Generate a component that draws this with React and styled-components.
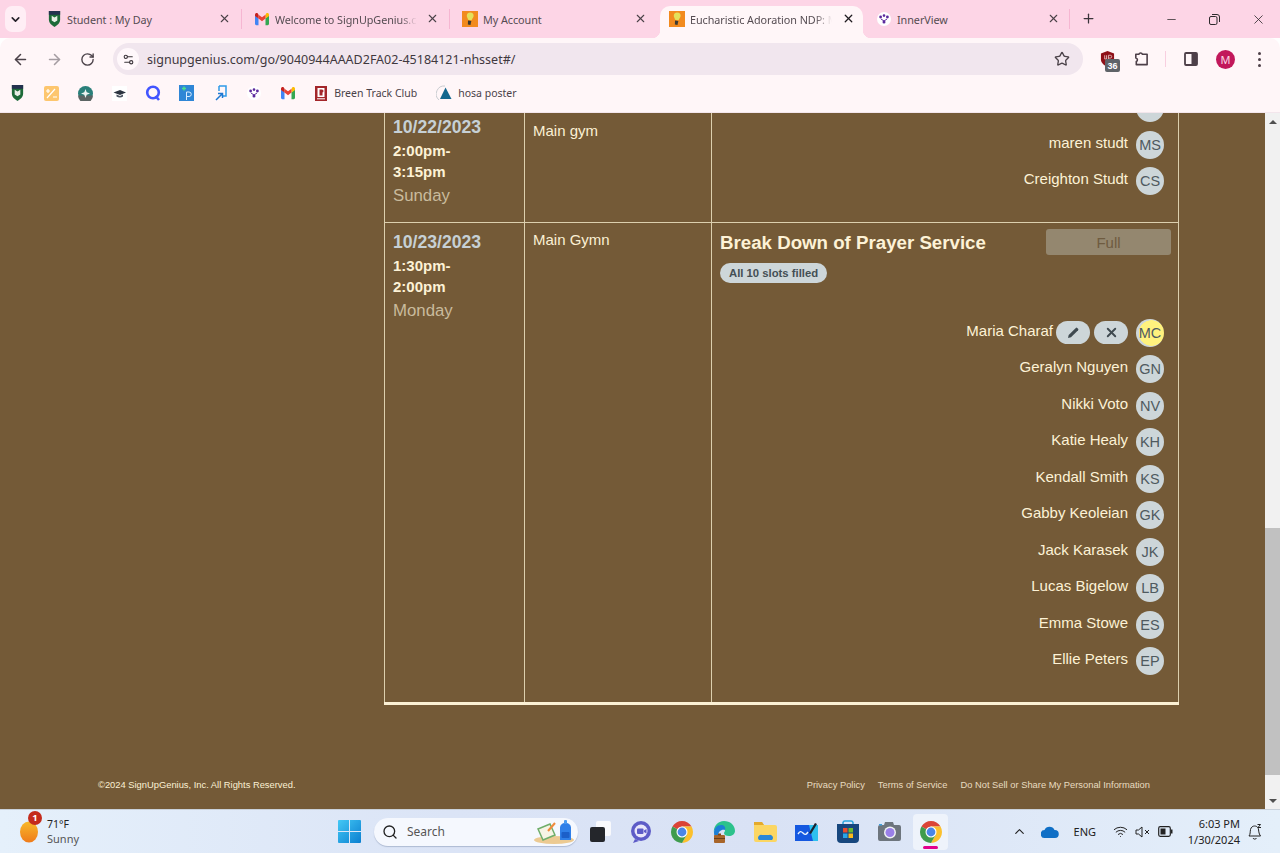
import React from "react";
import styled, { createGlobalStyle } from "styled-components";
import { ArrowLeft, ArrowRight, RotateCw, Star, X, Plus, Minus, ChevronDown, ChevronUp, Search, Wifi, Settings2 } from "lucide-react";

const GlobalStyle = createGlobalStyle`
  html, body { margin: 0; padding: 0; height: 100%; overflow: hidden; }
  #root { height: 100%; }
  * { box-sizing: border-box; }
`;

/* ---------- favicons and drawings ---------- */
const Shield = ({ size = 15 }) => (
  <svg width={size} height={size + 1} viewBox="0 0 16 17">
    <path d="M2 0h12v9c0 4-3 6-6 8-3-2-6-4-6-8z" fill="#1d6a38" />
    <path d="M2 0h12v4H2z" fill="#24314f" />
    <path d="M5 5l3 2 3-2v5l-3 2-3-2z" fill="#e8efe6" />
  </svg>
);
const Gmail = ({ size = 14 }) => (
  <svg width={size} height={size} viewBox="0 0 16 14">
    <path d="M0 3v9.5c0 .8.7 1.5 1.5 1.5H4V6z" fill="#4285f4" />
    <path d="M16 3v9.5c0 .8-.7 1.5-1.5 1.5H12V6z" fill="#34a853" />
    <path d="M12 2v4.5L16 3.5V2c0-1.7-2-2.5-3-1.5z" fill="#fbbc04" />
    <path d="M4 2v4.5l4 3 4-3V2L8 5z" fill="#ea4335" />
    <path d="M0 2v1.5l4 3V2L3 .5C2-.5 0 .3 0 2z" fill="#c5221f" />
  </svg>
);
const Bulb = () => (
  <svg width="16" height="16" viewBox="0 0 16 16">
    <rect width="16" height="16" fill="#f28a1e" />
    <path d="M8 1.5c2.500 0 4 1.700 3.600 3.800-.3 1.500-1.600 2.400-2 4L6 8.800C6 7.400 4.700 6.300 4.800 4.600 5 2.700 6.200 1.500 8 1.500z" fill="#e4e05a" />
    <path d="M6 9.500l3.300.6-.8 3.900-2.600-.5z" fill="#3b3a32" />
  </svg>
);
const InnerView = ({ bg = "#fff" }) => (
  <svg width="14" height="14" viewBox="0 0 14 14">
    <circle cx="7" cy="7" r="7" fill={bg} />
    <circle cx="3.6" cy="5" r="1.4" fill="#5b2a9d" />
    <circle cx="10.4" cy="5" r="1.4" fill="#5b2a9d" />
    <circle cx="7" cy="3.6" r="1.3" fill="#5b2a9d" />
    <circle cx="7" cy="10" r="1.5" fill="#5b2a9d" />
    <path d="M4 7l3 2 3-2" stroke="#5b2a9d" fill="none" strokeWidth="1" />
  </svg>
);
const CalcIcon = () => (
  <svg width="15" height="15" viewBox="0 0 15 15">
    <rect width="15" height="15" rx="2" fill="#fdc66e" />
    <path d="M2 5h4M4 3v4M3 12l8-9M9 11h4" stroke="#fff" strokeWidth="1.2" />
  </svg>
);
const CompassIcon = () => (
  <svg width="15" height="15" viewBox="0 0 15 15">
    <circle cx="7.5" cy="7.5" r="7.5" fill="#2a7f7a" />
    <path d="M0 9.5h15A7.500 7.500 0 0 1 0 9.500z" fill="#5b6463" />
    <path d="M7.5 3l1.200 3.300L12 7.500 8.700 8.700 7.500 12 6.300 8.700 3 7.500l3.300-1.200z" fill="#eef3f2" />
  </svg>
);
const CapIcon = () => (
  <svg width="15" height="15" viewBox="0 0 15 15">
    <rect width="15" height="15" fill="#fff" />
    <path d="M1.5 6.500L8 4l6 2.500L8 9z" fill="#2c3440" />
    <path d="M4.5 8.500v2c2 1.300 5 1.300 6.500 0v-2L8 10z" fill="#4a5360" />
  </svg>
);
const QIcon = () => (
  <svg width="16" height="16" viewBox="0 0 16 16">
    <circle cx="8" cy="7.5" r="5.8" fill="none" stroke="#4255ff" strokeWidth="2.6" />
    <path d="M10.5 11l3.500 4" stroke="#4255ff" strokeWidth="2.6" />
  </svg>
);
const PIcon = () => (
  <svg width="15" height="16" viewBox="0 0 15 16">
    <rect width="15" height="16" fill="#2f86d6" />
    <path d="M3 3.5h4M5 1.500v4" stroke="#4ee08a" strokeWidth="1.4" />
    <path d="M7.5 15V7h2.500a2 2 0 0 1 0 4.500H7.500" stroke="#d9ecff" strokeWidth="1" fill="none" />
  </svg>
);
const LinkIcon = () => (
  <svg width="14" height="16" viewBox="0 0 14 16">
    <path d="M5 1h7v10H8M5 1v5" stroke="#2f9be8" strokeWidth="1.5" fill="none" />
    <path d="M2 15l6-6M4 8.500h4.500V13" stroke="#1f78d1" strokeWidth="1.5" fill="none" />
  </svg>
);
const BreenIcon = () => (
  <svg width="12" height="15" viewBox="0 0 12 15">
    <rect width="12" height="15" fill="#a3262a" />
    <rect x="2.5" y="2" width="7" height="9" fill="#fff" />
    <path d="M4.5 3.500h2.500a1 1 0 0 1 0 3h-2.500zM4.500 6.500h3v3h-3z" fill="#a3262a" />
    <rect x="2" y="12.3" width="8" height="1" fill="#fff" />
  </svg>
);
const HosaIcon = () => (
  <svg width="17" height="17" viewBox="0 0 17 17">
    <path d="M3 15A8 8 0 0 1 9 1" stroke="#c9ccd0" fill="none" />
    <path d="M9.5 2.500L15.500 14H4z" fill="#14688f" />
  </svg>
);
const ShieldExt = () => (
  <svg width="15" height="16" viewBox="0 0 16 17">
    <path d="M8 0l7 2.500V9c0 3.500-3 6-7 8-4-2-7-4.500-7-8V2.500z" fill="#8f1018" />
    <path d="M5 4.500v4h2v-4M9 9V4.500h2a1.500 1.500 0 0 1 0 3H9" stroke="#e8c9c9" fill="none" strokeWidth=".9" />
  </svg>
);
const ExtPuzzle = () => (
  <svg width="17" height="18" viewBox="0 0 17 18" fill="none" stroke="#4d3f48" strokeWidth="1.7" strokeLinejoin="round">
    <path d="M3 4h3.200a2 2 0 0 1 3.800 0H15v11H3.500v-3.300a2 2 0 0 0-.5-3.800z" />
  </svg>
);
const SidePanel = () => (
  <svg width="14" height="14" viewBox="0 0 14 14">
    <rect x="1" y="1" width="12" height="12" rx="1" fill="#fff7f9" stroke="#4d3f48" strokeWidth="1.8" />
    <rect x="7.5" y="1" width="5.500" height="12" fill="#4d3f48" />
  </svg>
);
const Restore = () => (
  <svg width="11" height="11" viewBox="0 0 11 11" fill="none" stroke="#2d2a2c">
    <rect x=".5" y="2.500" width="7.5" height="8" rx="1.5" />
    <path d="M3 .5h5a2.500 2.500 0 0 1 2.500 2.500v5" />
  </svg>
);
const Chrome = ({ size = 22 }) => (
  <svg width={size} height={size} viewBox="4 4 40 40">
    <path d="M6.680 14A20 20 0 0 1 41.320 14H24L15.340 19z" fill="#db4437" />
    <path d="M41.320 14A20 20 0 0 1 24 44L32.660 29 24 14z" fill="#fbc02d" />
    <path d="M24 44A20 20 0 0 1 6.680 14L15.340 19 32.660 29z" fill="#3f9c4d" />
    <circle cx="24" cy="24" r="10" fill="#fff" />
    <circle cx="24" cy="24" r="8" fill="#4a86e8" />
  </svg>
);
const Sun = () => (
  <svg width="18" height="22" viewBox="0 0 18 22">
    <defs>
      <linearGradient id="sun" x1="0" y1="0" x2="0" y2="1">
        <stop offset="0" stopColor="#f8b92a" />
        <stop offset="1" stopColor="#ef7b1a" />
      </linearGradient>
    </defs>
    <ellipse cx="9" cy="11" rx="9" ry="10.5" fill="url(#sun)" />
  </svg>
);
const WinLogo = () => (
  <svg width="23" height="23" viewBox="0 0 23 23">
    <defs>
      <linearGradient id="win" x1="0" y1="0" x2="1" y2="1">
        <stop offset="0" stopColor="#43c8f5" />
        <stop offset="1" stopColor="#0b7fd0" />
      </linearGradient>
    </defs>
    <path d="M1 0h10v11H0V1a1 1 0 0 1 1-1zM12 0h10a1 1 0 0 1 1 1v10H12zM0 12h11v11H1a1 1 0 0 1-1-1zM12 12h11v10a1 1 0 0 1-1 1H12z" fill="url(#win)" />
  </svg>
);
const SearchArt = () => (
  <svg width="42" height="26" viewBox="0 0 42 26">
    <ellipse cx="21" cy="21" rx="20" ry="4" fill="#ecca92" />
    <path d="M5 10l12-5 5 11-12 5z" fill="#f6f4e4" stroke="#6fae6a" strokeWidth="1.5" />
    <path d="M15 12l7-8" stroke="#f08a3c" strokeWidth="2" />
    <path d="M27 9c0-3 2-5 5.500-5S38 6 38 9v12H27z" fill="#2f7fe8" />
    <rect x="31" y="1" width="3" height="4" rx="1" fill="#4a9af0" />
    <rect x="28.5" y="13" width="8" height="6" rx="1" fill="#1c5fc9" />
  </svg>
);
const TaskView = () => (
  <svg width="22" height="22" viewBox="0 0 22 22">
    <rect x="7" y="0" width="15" height="15" rx="2" fill="#f8f9fc" />
    <rect x="1" y="6" width="15" height="15" rx="2" fill="#24262b" />
  </svg>
);
const Meet = () => (
  <svg width="22" height="22" viewBox="0 0 22 22">
    <circle cx="11" cy="10" r="10" fill="#5d5bc7" />
    <path d="M5 18l-2 4 6-2z" fill="#5d5bc7" />
    <circle cx="11" cy="10" r="6.5" fill="#e9e6fa" />
    <rect x="7" y="7.5" width="6.5" height="5.5" rx="1" fill="#5d5bc7" />
    <path d="M14 9.500l2.500-1.500v4.500L14 11z" fill="#5d5bc7" />
  </svg>
);
const Edge = () => (
  <svg width="22" height="22" viewBox="0 0 22 22">
    <path d="M11 0c6 0 11 4 11 10 0 3-3 5-6 5-3 0-5-1-5-3 0-1 1-1 1-3 0-3-3-5-6-4C3 6 1 9 1 12 0 5 5 0 11 0z" fill="#2cc28c" />
    <path d="M1 12c0-5 3-8 7-8 3 0 5 2 4 5-3-1-7 1-7 6 0 3 2 6 6 7-6 0-10-5-10-10z" fill="#1c7fd6" />
    <rect x="1" y="14" width="11" height="8" rx="1" fill="#a8652a" />
    <rect x="1" y="17" width="11" height="1" fill="#6d3f18" />
    <rect x="5" y="12.5" width="3" height="2" fill="#7d4a1e" />
  </svg>
);
const Folder = () => (
  <svg width="23" height="20" viewBox="0 0 23 20">
    <path d="M0 2a2 2 0 0 1 2-2h6l2 3h11a2 2 0 0 1 2 2v13a2 2 0 0 1-2 2H2a2 2 0 0 1-2-2z" fill="#fbd663" />
    <path d="M0 0h8l2 3H0z" fill="#e4aa2c" />
    <path d="M5 18a3 3 0 0 1 3-5h7a3 3 0 0 1 3 5z" fill="#2a87d8" />
  </svg>
);
const Whiteboard = () => (
  <svg width="23" height="21" viewBox="0 0 23 21">
    <rect y="4" width="23" height="16" fill="#1558e0" />
    <path d="M14 4h9v16h-5z" fill="#2ec0ee" />
    <path d="M3 13c2-3 3-3 5-1s3 2 5-1" stroke="#eaf4ff" strokeWidth="1.4" fill="none" />
    <path d="M14 12l6-10 2 1-6 10z" fill="#1c2230" />
  </svg>
);
const Store = () => (
  <svg width="22" height="23" viewBox="0 0 22 23">
    <path d="M6 4V2.500A2 2 0 0 1 8 1h6a2 2 0 0 1 2 1.500V4" stroke="#2ba6de" strokeWidth="1.5" fill="none" />
    <path d="M0 4h22v15a4 4 0 0 1-4 4H4a4 4 0 0 1-4-4z" fill="#17477e" />
    <rect x="6" y="8" width="4.5" height="4.5" fill="#ea4d2c" />
    <rect x="11.5" y="8" width="4.5" height="4.5" fill="#6dba2e" />
    <rect x="6" y="13.5" width="4.5" height="4.5" fill="#27a5e8" />
    <rect x="11.5" y="13.5" width="4.5" height="4.5" fill="#fbbb1b" />
  </svg>
);
const Camera = () => (
  <svg width="23" height="19" viewBox="0 0 23 19">
    <path d="M0 5a2 2 0 0 1 2-2h4l1-3h8l1 3h5a2 2 0 0 1 2 2v12a2 2 0 0 1-2 2H2a2 2 0 0 1-2-2z" fill="#6d757d" />
    <circle cx="12" cy="10.5" r="6" fill="#f0f2f4" />
    <circle cx="12" cy="10.5" r="4.5" fill="#9a80e8" />
    <rect x="1" y="2" width="3" height="1.5" fill="#3f9fdc" />
  </svg>
);
const Cloud = () => (
  <svg width="18" height="12" viewBox="0 0 18 12">
    <path d="M4 12a4 4 0 0 1-.5-8A5.500 5.500 0 0 1 13.500 4 4 4 0 0 1 14 12z" fill="#0f6fc6" />
  </svg>
);
const Speaker = () => (
  <svg width="16" height="14" viewBox="0 0 16 14" fill="none" stroke="#222" strokeWidth="1">
    <path d="M1 5v4h2.500L7 12V2L3.500 5z" />
    <path d="M10 5l4 4M14 5l-4 4" />
  </svg>
);
const Battery = () => (
  <svg width="15" height="11" viewBox="0 0 15 11">
    <rect x=".7" y=".7" width="11.6" height="9.6" rx="1.5" fill="none" stroke="#222" strokeWidth="1.2" />
    <rect x="2.5" y="2.5" width="5" height="6" fill="#222" />
    <rect x="13" y="3.5" width="1.5" height="4" fill="#222" />
  </svg>
);
const Bell = () => (
  <svg width="14" height="18" viewBox="0 0 14 18" fill="none" stroke="#222" strokeWidth="1">
    <path d="M1 13c1.500-2 1-4 1.500-6.500C3 4 5 3 6.500 3s3 .5 3.800 2.500c.5 1.500.2 5 2.200 7.500z" />
    <path d="M5 15c.5 1.500 3 1.500 3.500 0" />
    <path d="M9.500 1.500h3L10 4.500h3" />
  </svg>
);
const PencilGlyph = () => (
  <svg width="11" height="11" viewBox="0 0 11 11">
    <path d="M0 11l.7-3L7.800.9a1 1 0 0 1 1.400 0l.9.9a1 1 0 0 1 0 1.400L3 10.300z" fill="#3f4a50" />
  </svg>
);

/* ---------- browser chrome ---------- */
const Screen = styled.div`
  width: 1280px;
  height: 853px;
  display: flex;
  flex-direction: column;
  overflow: hidden;
  font-family: "Liberation Sans", Arial, sans-serif;
`;
const TabStrip = styled.div`
  height: 38px;
  flex: none;
  background: #fdd5e6;
  display: flex;
  align-items: flex-end;
  padding-left: 5px;
`;
const TabMenu = styled.div`
  width: 21px;
  height: 26px;
  margin: 0 10px 6px 0;
  border-radius: 7px;
  background: #ffeef5;
  display: flex;
  align-items: center;
  justify-content: center;
  color: #26222a;
`;
const Tab = styled.div`
  position: relative;
  width: ${(p) => (p.$last ? 201 : 208)}px;
  height: 32px;
  padding: 0 10px 6px ${(p) => (p.$active || p.$last ? 9 : 10)}px;
  ${(p) => p.$last && "padding-left: 8px;"}
  display: flex;
  align-items: center;
  border-radius: 10px 10px 0 0;
  background: ${(p) => (p.$active ? "#fff6f8" : "transparent")};
  ${(p) =>
    p.$active &&
    `width: 203px;
     margin-right: 5px;
     &::before, &::after {
       content: "";
       position: absolute;
       bottom: 0;
       width: 8px;
       height: 8px;
     }
     &::before { left: -8px; background: radial-gradient(circle at 0 0, transparent 8px, #fff6f8 8.5px); }
     &::after { right: -8px; background: radial-gradient(circle at 100% 0, transparent 8px, #fff6f8 8.5px); }`}
`;
const FaviconSlot = styled.div`
  width: 16px;
  height: 17px;
  margin-right: 4px;
  flex: none;
  display: flex;
  align-items: center;
  justify-content: center;
`;
const TabTitle = styled.div`
  width: 142px;
  margin-left: 1px;
  font: 10.8px "Noto Sans", sans-serif;
  letter-spacing: -0.05px;
  color: #554c52;
  white-space: nowrap;
  overflow: hidden;
  ${(p) => p.$fade && "mask-image: linear-gradient(90deg, #000 88%, transparent);"}
`;
const TabClose = styled.div`
  position: absolute;
  left: ${(p) => (p.$last ? 179 : 182)}px;
  top: 6px;
  color: ${(p) => (p.$active ? "#1f1c20" : "#4a4248")};
  display: flex;
`;
const TabDivider = styled.div`
  position: absolute;
  right: ${(p) => p.$right || 1}px;
  top: 3px;
  width: 1.5px;
  height: 20px;
  background: #f6b6d2;
`;
const NewTab = styled.div`
  margin: 0 0 12px 12px;
  color: #3b343a;
  display: flex;
`;
const WindowControls = styled.div`
  margin-left: auto;
  display: flex;
  align-items: center;
  height: 38px;
  padding-right: 14px;
  gap: 31px;
  color: #2d2a2c;
`;
const Toolbar = styled.div`
  height: 42px;
  flex: none;
  background: #fff6f8;
  border-radius: 10px 10px 0 0;
  display: flex;
  align-items: center;
  padding-left: 12px;
`;
const NavButton = styled.div`
  width: 34px;
  display: flex;
  color: ${(p) => (p.$off ? "#a59da2" : "#4b4249")};
`;
const Omnibox = styled.div`
  width: 970px;
  height: 32px;
  margin: 0 0 0 -1px;
  border-radius: 16px;
  background: #f1e6ee;
  display: flex;
  align-items: center;
  padding: 0 13px 0 4px;
`;
const SiteChip = styled.div`
  width: 22px;
  height: 22px;
  border-radius: 50%;
  background: #fff8fb;
  display: flex;
  align-items: center;
  justify-content: center;
  color: #3b343a;
`;
const Url = styled.div`
  margin-left: 8px;
  flex: 1;
  font: 12.5px "Noto Sans", sans-serif;
  color: #3f383e;
`;
const ExtGroup = styled.div`
  display: flex;
  align-items: center;
  height: 32px;
  padding-left: 16px;
`;
const ExtBadge = styled.div`
  position: absolute;
  left: 6px;
  top: 10px;
  width: 15px;
  height: 13px;
  border-radius: 2px;
  background: #5f6368;
  color: #fff;
  font: bold 9px "Liberation Sans", sans-serif;
  display: flex;
  align-items: center;
  justify-content: center;
`;
const ExtSlot = styled.div`
  position: relative;
  width: 16px;
  height: 20px;
  display: flex;
  align-items: center;
  justify-content: center;
  margin-right: ${(p) => p.$gap}px;
  color: #4d3f48;
`;
const ToolbarDivider = styled.div`
  width: 1px;
  height: 16px;
  background: #f8cfe0;
  margin-right: 17px;
`;
const Profile = styled.div`
  width: 19px;
  height: 19px;
  border-radius: 50%;
  background: #c2185b;
  color: #fbd6e4;
  font: 11px "Noto Sans", sans-serif;
  display: flex;
  align-items: center;
  justify-content: center;
  margin-right: 23px;
`;
const Dots = styled.div`
  display: flex;
  flex-direction: column;
  gap: 3px;
  i {
    width: 3px;
    height: 3px;
    border-radius: 50%;
    background: #4d3f48;
  }
`;
const BookmarkBar = styled.div`
  height: 33px;
  flex: none;
  background: #fff6f8;
  border-bottom: 1px solid #f3e6ec;
  display: flex;
  align-items: center;
  padding: 0 0 6px 1px;
`;
const Bookmark = styled.div`
  width: ${(p) => (p.$gap ? "auto" : "33.8px")};
  display: flex;
  align-items: center;
  justify-content: ${(p) => (p.$gap ? "flex-start" : "center")};
  gap: ${(p) => p.$gap || 0}px;
  margin-left: ${(p) => p.$ml || 0}px;
  margin-right: ${(p) => p.$mr || 0}px;
  font: 10.5px "Noto Sans", sans-serif;
  color: #4a4248;
  white-space: nowrap;
`;

/* ---------- page ---------- */
const Viewport = styled.div`
  flex: 1;
  min-height: 0;
  display: flex;
  background: #745a37;
`;
const Content = styled.div`
  flex: 1;
  min-width: 0;
  display: flex;
  flex-direction: column;
  overflow: hidden;
`;
const Table = styled.div`
  width: 795px;
  margin-left: 384px;
  border-bottom: 3px solid #fbf0d4;
`;
const Row = styled.div`
  display: grid;
  grid-template-columns: 140px 187px 468px;
  height: ${(p) => p.$height}px;
  border-bottom: ${(p) => (p.$ruled ? "1px solid #dccfae" : "none")};
`;
const Cell = styled.div`
  border-left: 1px solid #dccfae;
  padding: 0 8px;
  min-width: 0;
  overflow: hidden;
`;
const SlotCell = styled(Cell)`
  border-right: 1px solid #dccfae;
  padding: 0 14px 18.5px 8px;
  display: flex;
  flex-direction: column;
  justify-content: flex-end;
`;
const DateText = styled.div`
  margin-top: ${(p) => p.$top}px;
  font-size: 17.6px;
  line-height: 22px;
  font-weight: bold;
  color: #c6d0d5;
`;
const TimeText = styled.div`
  margin-top: 1.5px;
  font-size: 15px;
  line-height: 21.5px;
  font-weight: bold;
  color: #fdf2d6;
`;
const DayText = styled.div`
  margin-top: 1px;
  font-size: 16.8px;
  line-height: 24px;
  color: #c9bb9d;
`;
const Location = styled.div`
  margin-top: ${(p) => p.$top}px;
  font-size: 15px;
  line-height: 18px;
  color: #fbf0d4;
`;
const SlotHead = styled.div`
  flex: 1;
  display: flex;
  justify-content: space-between;
  align-items: flex-start;
  margin-right: -7px;
  padding-top: 6px;
`;
const SlotTitle = styled.h3`
  margin: 2px 0 0;
  font-size: 18.7px;
  line-height: 24px;
  font-weight: bold;
  color: #fdf2d6;
`;
const FullButton = styled.div`
  width: 125px;
  height: 26px;
  border-radius: 3px;
  background: #94876f;
  color: #6f5b40;
  font-size: 15px;
  display: flex;
  align-items: center;
  justify-content: center;
`;
const FilledPill = styled.div`
  display: inline-block;
  height: 20px;
  margin-top: 8px;
  padding: 0 9px;
  border-radius: 10px;
  background: #cdd6d9;
  color: #444f55;
  font-size: 11.3px;
  font-weight: bold;
  line-height: 20px;
`;
const NameRow = styled.div`
  height: 28px;
  margin-bottom: 8.5px;
  display: flex;
  justify-content: flex-end;
  align-items: center;
`;
const Name = styled.span`
  font-size: 15px;
  line-height: 18px;
  margin-top: -4px;
  color: #fdf2d6;
`;
const Pill = styled.div`
  width: 34px;
  height: 23px;
  margin-left: ${(p) => p.$ml}px;
  border-radius: 12px;
  background: #cdd6d9;
  color: #3f4a50;
  display: flex;
  align-items: center;
  justify-content: center;
`;
const Avatar = styled.div`
  width: 28px;
  height: 28px;
  margin-left: 8px;
  border-radius: 50%;
  background: ${(p) =>
    p.$me
      ? "radial-gradient(circle at 15.5px 14px, #fff27e 12.5px, #cdd6d9 13px)"
      : "#cdd6d9"};
  color: #4f5a5f;
  font-size: 14.5px;
  display: flex;
  align-items: center;
  justify-content: center;
  flex: none;
`;
const Footer = styled.div`
  margin-top: 74px;
  display: flex;
  justify-content: space-between;
  padding: 0 115px 0 98px;
  font-size: 9.35px;
  line-height: 12px;
  color: #fbf0d4;
`;
const FooterLinks = styled.div`
  display: flex;
  gap: 13px;
  color: #e8dcc0;
`;
const Scrollbar = styled.div`
  width: 15px;
  flex: none;
  background: #f1f1f1;
  display: flex;
  flex-direction: column;
  align-items: center;
`;
const ScrollArrow = styled.div`
  width: 15px;
  height: 17px;
  flex: none;
  display: flex;
  align-items: center;
  justify-content: center;
  &::before {
    content: "";
    border-left: 4px solid transparent;
    border-right: 4px solid transparent;
    ${(p) => (p.$down ? "border-top: 4px solid #505050;" : "border-bottom: 4px solid #505050;")}
  }
`;
const ScrollGap = styled.div`
  flex: ${(p) => (p.$grow ? 1 : "none")};
  height: ${(p) => p.$h || 0}px;
`;
const ScrollThumb = styled.div`
  width: 15px;
  height: 247px;
  background: #c1c1c1;
  flex: none;
`;

/* ---------- taskbar ---------- */
const Taskbar = styled.div`
  height: 44px;
  flex: none;
  border-top: 1px solid #c9d1da;
  background: linear-gradient(90deg, #e5f0fb 0%, #dbe4f6 35%, #d9e2f5 60%, #e4effa 100%);
  display: flex;
  align-items: center;
  padding-left: 20px;
  position: relative;
`;
const Weather = styled.div`
  position: relative;
  width: 318px;
  display: flex;
  align-items: center;
  gap: 9px;
  flex: none;
`;
const WeatherBadge = styled.div`
  position: absolute;
  left: 8px;
  top: -6px;
  width: 14px;
  height: 14px;
  border-radius: 50%;
  background: #c42b1c;
  color: #fff;
  font: bold 9.5px "Noto Sans", sans-serif;
  display: flex;
  align-items: center;
  justify-content: center;
`;
const WeatherText = styled.div`
  font: 10.5px/14px "Noto Sans", sans-serif;
  color: #222;
  span {
    display: block;
    color: #555;
    font-size: 11px;
    line-height: 16px;
  }
`;
const SearchBox = styled.div`
  width: 204px;
  height: 28px;
  margin-left: 13px;
  border-radius: 14px;
  background: #f5f8fe;
  box-shadow: 0 1px 1px rgba(70, 90, 130, 0.3);
  display: flex;
  align-items: center;
  padding-left: 8px;
  gap: 9px;
  color: #222;
  font: 12px "Noto Sans", sans-serif;
  span {
    flex: 1;
    color: #555;
  }
  svg:last-child {
    margin-right: 3px;
  }
`;
const TaskIcons = styled.div`
  display: flex;
  align-items: center;
  margin-left: 1px;
`;
const TaskIcon = styled.div`
  position: relative;
  width: 41.4px;
  height: 36px;
  display: flex;
  align-items: center;
  justify-content: center;
  border-radius: 4px;
  ${(p) =>
    p.$active &&
    `background: #eef3fb;
     width: 35px;
     margin-left: 3px;
     &::after {
       content: "";
       position: absolute;
       left: 10px;
       bottom: 1px;
       width: 15px;
       height: 3px;
       border-radius: 2px;
       background: #e3008c;
     }`}
`;
const Tray = styled.div`
  position: absolute;
  right: 0;
  top: 0;
  height: 43px;
  display: flex;
  align-items: center;
  color: #222;
`;
const TrayItem = styled.div`
  display: flex;
  align-items: center;
  margin-right: ${(p) => p.$gap}px;
  font: 11px "Noto Sans", sans-serif;
`;
const Clock = styled.div`
  width: 54px;
  margin-right: 8px;
  text-align: right;
  font: 11px/15.5px "Noto Sans", sans-serif;
  color: #222;
  white-space: nowrap;
`;

const tabs = [
  { icon: <Shield />, title: "Student : My Day" },
  { icon: <Gmail />, title: "Welcome to SignUpGenius.com", fade: true },
  { icon: <Bulb />, title: "My Account" },
  { icon: <Bulb />, title: "Eucharistic Adoration NDP: Moment", fade: true, active: true },
  { icon: <InnerView />, title: "InnerView", last: true },
];

const teardown = [
  ["Maria Charaf", "MC", true],
  ["Geralyn Nguyen", "GN"],
  ["Nikki Voto", "NV"],
  ["Katie Healy", "KH"],
  ["Kendall Smith", "KS"],
  ["Gabby Keoleian", "GK"],
  ["Jack Karasek", "JK"],
  ["Lucas Bigelow", "LB"],
  ["Emma Stowe", "ES"],
  ["Ellie Peters", "EP"],
];

const bookmarkIcons = [<Shield />, <CalcIcon />, <CompassIcon />, <CapIcon />, <QIcon />, <PIcon />, <LinkIcon />, <InnerView />, <Gmail />];

export default function App() {
  return (
    <Screen>
      <GlobalStyle />
      <TabStrip>
        <TabMenu>
          <ChevronDown size={13} strokeWidth={3} />
        </TabMenu>
        {tabs.map((t, i) => (
          <Tab key={i} $active={t.active} $last={t.last}>
            <FaviconSlot>{t.icon}</FaviconSlot>
            <TabTitle $fade={t.fade}>{t.title}</TabTitle>
            <TabClose $active={t.active} $last={t.last}>
              <X size={13} strokeWidth={t.active ? 2.4 : 2} />
            </TabClose>
            {!t.active && i !== 2 && <TabDivider $right={i === 4 ? -1 : 2} />}
          </Tab>
        ))}
        <NewTab>
          <Plus size={15} strokeWidth={2} />
        </NewTab>
        <WindowControls>
          <Minus size={13} strokeWidth={1.4} />
          <Restore />
          <X size={15} strokeWidth={1.3} />
        </WindowControls>
      </TabStrip>
      <Toolbar>
        <NavButton>
          <ArrowLeft size={17} strokeWidth={2.2} />
        </NavButton>
        <NavButton $off>
          <ArrowRight size={17} strokeWidth={2.2} />
        </NavButton>
        <NavButton>
          <RotateCw size={15} strokeWidth={2.2} />
        </NavButton>
        <Omnibox>
          <SiteChip>
            <Settings2 size={13} strokeWidth={2} />
          </SiteChip>
          <Url>signupgenius.com/go/9040944AAAD2FA02-45184121-nhsset#/</Url>
          <Star size={16} strokeWidth={2} color="#4b4249" />
        </Omnibox>
        <ExtGroup>
          <ExtSlot $gap={18}>
            <ShieldExt />
            <ExtBadge>36</ExtBadge>
          </ExtSlot>
          <ExtSlot $gap={16}>
            <ExtPuzzle />
          </ExtSlot>
          <ToolbarDivider />
          <ExtSlot $gap={17}>
            <SidePanel />
          </ExtSlot>
          <Profile>M</Profile>
          <Dots>
            <i />
            <i />
            <i />
          </Dots>
        </ExtGroup>
      </Toolbar>
      <BookmarkBar>
        {bookmarkIcons.map((icon, i) => (
          <Bookmark key={i}>{icon}</Bookmark>
        ))}
        <Bookmark $gap={7} $ml={10} $mr={19}>
          <BreenIcon />
          Breen Track Club
        </Bookmark>
        <Bookmark $gap={5}>
          <HosaIcon />
          hosa poster
        </Bookmark>
      </BookmarkBar>
      <Viewport>
        <Content>
          <Table>
            <Row $height={110} $ruled>
              <Cell>
                <DateText $top={3}>10/22/2023</DateText>
                <TimeText>
                  2:00pm-
                  <br />
                  3:15pm
                </TimeText>
                <DayText>Sunday</DayText>
              </Cell>
              <Cell>
                <Location $top={9}>Main gym</Location>
              </Cell>
              <SlotCell>
                <NameRow>
                  <Avatar />
                </NameRow>
                <NameRow>
                  <Name>maren studt</Name>
                  <Avatar>MS</Avatar>
                </NameRow>
                <NameRow>
                  <Name>Creighton Studt</Name>
                  <Avatar>CS</Avatar>
                </NameRow>
              </SlotCell>
            </Row>
            <Row $height={479}>
              <Cell>
                <DateText $top={8}>10/23/2023</DateText>
                <TimeText>
                  1:30pm-
                  <br />
                  2:00pm
                </TimeText>
                <DayText>Monday</DayText>
              </Cell>
              <Cell>
                <Location $top={8}>Main Gymn</Location>
              </Cell>
              <SlotCell>
                <SlotHead>
                  <div>
                    <SlotTitle>Break Down of Prayer Service</SlotTitle>
                    <FilledPill>All 10 slots filled</FilledPill>
                  </div>
                  <FullButton>Full</FullButton>
                </SlotHead>
                {teardown.map(([name, initials, me]) => (
                  <NameRow key={initials}>
                    <Name>{name}</Name>
                    {me && (
                      <>
                        <Pill $ml={3}>
                          <PencilGlyph />
                        </Pill>
                        <Pill $ml={4}>
                          <X size={15} strokeWidth={3} />
                        </Pill>
                      </>
                    )}
                    <Avatar $me={me}>{initials}</Avatar>
                  </NameRow>
                ))}
              </SlotCell>
            </Row>
          </Table>
          <Footer>
            <span>©2024 SignUpGenius, Inc. All Rights Reserved.</span>
            <FooterLinks>
              <span>Privacy Policy</span>
              <span>Terms of Service</span>
              <span>Do Not Sell or Share My Personal Information</span>
            </FooterLinks>
          </Footer>
        </Content>
        <Scrollbar>
          <ScrollArrow />
          <ScrollGap $grow />
          <ScrollThumb />
          <ScrollGap $h={17} />
          <ScrollArrow $down />
        </Scrollbar>
      </Viewport>
      <Taskbar>
        <Weather>
          <Sun />
          <WeatherBadge>1</WeatherBadge>
          <WeatherText>
            71°F
            <span>Sunny</span>
          </WeatherText>
        </Weather>
        <WinLogo />
        <SearchBox>
          <Search size={16} strokeWidth={2} />
          <span>Search</span>
          <SearchArt />
        </SearchBox>
        <TaskIcons>
          <TaskIcon><TaskView /></TaskIcon>
          <TaskIcon><Meet /></TaskIcon>
          <TaskIcon><Chrome /></TaskIcon>
          <TaskIcon><Edge /></TaskIcon>
          <TaskIcon><Folder /></TaskIcon>
          <TaskIcon><Whiteboard /></TaskIcon>
          <TaskIcon><Store /></TaskIcon>
          <TaskIcon><Camera /></TaskIcon>
          <TaskIcon $active><Chrome /></TaskIcon>
        </TaskIcons>
        <Tray>
          <TrayItem $gap={14}><ChevronUp size={15} strokeWidth={1.8} /></TrayItem>
          <TrayItem $gap={15}><Cloud /></TrayItem>
          <TrayItem $gap={17}>ENG</TrayItem>
          <TrayItem $gap={7}><Wifi size={15} strokeWidth={1.6} /></TrayItem>
          <TrayItem $gap={7}><Speaker /></TrayItem>
          <TrayItem $gap={13}><Battery /></TrayItem>
          <Clock>
            6:03 PM
            <br />
            1/30/2024
          </Clock>
          <TrayItem $gap={18}><Bell /></TrayItem>
        </Tray>
      </Taskbar>
    </Screen>
  );
}
